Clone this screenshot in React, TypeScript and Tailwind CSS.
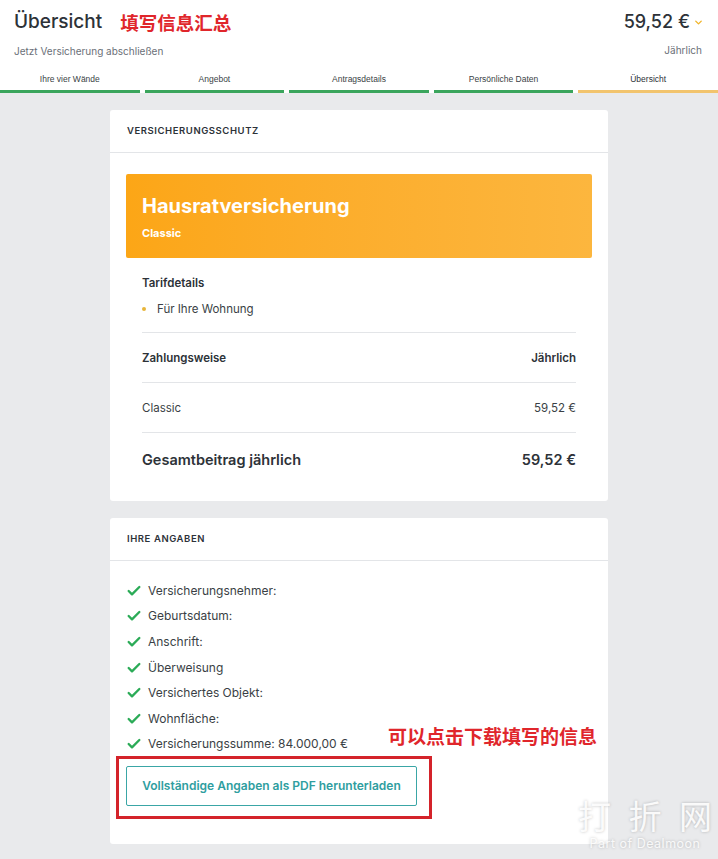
import { ChevronDown, Check } from 'lucide-react';

const steps = [
  { label: 'Ihre vier Wände', done: true },
  { label: 'Angebot', done: true },
  { label: 'Antragsdetails', done: true },
  { label: 'Persönliche Daten', done: true },
  { label: 'Übersicht', done: false },
];

const angaben = [
  'Versicherungsnehmer:',
  'Geburtsdatum:',
  'Anschrift:',
  'Überweisung',
  'Versichertes Objekt:',
  'Wohnfläche:',
  'Versicherungssumme: 84.000,00 €',
];

const font = { fontFamily: 'Inter, "Noto Sans CJK SC", sans-serif' };
const cjk = { fontFamily: '"Noto Sans CJK SC", sans-serif' };

export default function App() {
  return (
    <div className="relative min-h-[859px] w-[718px] overflow-hidden bg-[#e9eaec] text-[#2d3238]" style={font}>
      {/* Kopfbereich */}
      <header className="bg-white">
        <div className="flex justify-between px-[14px] pt-[9px]">
          <div>
            <div className="flex items-center gap-[18px]">
              <h1 className="text-[19px] font-medium leading-[26px] text-[#2d3238]">Übersicht</h1>
              <span className="text-[18.5px] font-bold leading-[24px] text-[#e0262b]" style={cjk}>
                填写信息汇总
              </span>
            </div>
            <p className="mt-[9px] text-[10px] leading-[14px] text-[#6b7078]">Jetzt Versicherung abschließen</p>
          </div>
          <div className="flex flex-col items-end pt-[1px]">
            <div className="flex items-center gap-[3px]">
              <span className="text-[18px] font-medium leading-[24px]">59,52 €</span>
              <ChevronDown className="h-[11px] w-[11px] text-[#f0b429]" strokeWidth={3} />
            </div>
            <span className="mt-[9px] pr-[2px] text-[10px] leading-[14px] text-[#6b7078]">Jährlich</span>
          </div>
        </div>
        <nav className="mt-[15px] flex gap-[5px]">
          {steps.map((s) => (
            <div key={s.label} className="flex flex-1 flex-col items-center">
              <span className={`text-[8.5px] leading-[12px] ${s.done ? 'text-[#3a3f45]' : 'font-medium text-[#2d3238]'}`} style={{ fontFamily: '"Liberation Sans", Arial, sans-serif' }}>
                {s.label}
              </span>
              <div className={`mt-[5px] h-[3px] w-full ${s.done ? 'bg-[#3aa55c]' : 'bg-[#f2c46d]'}`} />
            </div>
          ))}
        </nav>
      </header>

      <main className="flex flex-col items-center gap-[17px] pb-[14px] pt-[17px]">
        {/* Versicherungsschutz */}
        <section className="w-[498px] rounded-[3px] bg-white">
          <div className="border-b border-[#e3e5e8] px-[17px] py-[14px]">
            <h2 className="text-[9.5px] font-semibold uppercase leading-[14px] tracking-[0.06em] text-[#2d3238]">Versicherungsschutz</h2>
          </div>
          <div className="px-[16px] pt-[21px] pb-[30px]">
            <div className="rounded-[2px] bg-gradient-to-r from-[#fca616] to-[#fcb63e] px-[16px] pt-[18px] pb-[17px] text-white">
              <div className="text-[20px] font-bold leading-[28px]">Hausratversicherung</div>
              <div className="mt-[5px] text-[11px] font-bold leading-[16px]">Classic</div>
            </div>
            <div className="px-[16px]">
              <div className="pt-[17px] text-[11.5px] font-semibold leading-[16px]">Tarifdetails</div>
              <div className="mt-[10px] flex items-center gap-[11px] pb-[15px]">
                <span className="h-[4px] w-[4px] rounded-full bg-[#e8b53a]" />
                <span className="text-[11.5px] leading-[16px] text-[#3a3f45]">Für Ihre Wohnung</span>
              </div>
              <div className="flex items-center justify-between border-t border-[#e3e5e8] pt-[17px] pb-[16px] text-[11.5px] font-semibold leading-[16px]">
                <span>Zahlungsweise</span>
                <span>Jährlich</span>
              </div>
              <div className="flex items-center justify-between border-t border-[#e3e5e8] pt-[17px] pb-[16px] text-[11.5px] leading-[16px] text-[#3a3f45]">
                <span>Classic</span>
                <span>59,52 €</span>
              </div>
              <div className="flex items-center justify-between border-t border-[#e3e5e8] pt-[16px] text-[14.5px] font-semibold leading-[22px]">
                <span>Gesamtbeitrag jährlich</span>
                <span>59,52 €</span>
              </div>
            </div>
          </div>
        </section>

        {/* Ihre Angaben */}
        <section className="w-[498px] rounded-[3px] bg-white">
          <div className="border-b border-[#e3e5e8] px-[17px] py-[14px]">
            <h2 className="text-[9.5px] font-semibold uppercase leading-[14px] tracking-[0.06em] text-[#2d3238]">Ihre Angaben</h2>
          </div>
          <div className="relative px-[16px] pt-[17px] pb-[25px]">
            <ul className="flex flex-col">
              {angaben.map((a) => (
                <li key={a} className="flex h-[25.6px] items-center gap-[6px]">
                  <Check className="h-[16px] w-[16px] text-[#2bab57]" strokeWidth={3.5} />
                  <span className="text-[12px] leading-[16px] text-[#3a3f45]">{a}</span>
                </li>
              ))}
            </ul>
            <span className="absolute left-[278px] top-[163px] text-[19px] font-bold leading-[24px] text-[#e0262b]" style={cjk}>
              可以点击下载填写的信息
            </span>
            <div className="-ml-[10px] -mt-[1px] inline-block border-[3px] border-[#d4232a] pt-[7px] pb-[10px] pl-[7px] pr-[12px]">
              <button className="block h-[40px] w-[291px] rounded-[2px] border border-[#3aa6a6] text-[12px] font-semibold text-[#2f9ea0]">
                Vollständige Angaben als PDF herunterladen
              </button>
            </div>
          </div>
        </section>
      </main>

      {/* Wasserzeichen */}
      <div className="pointer-events-none absolute left-[578px] top-[795px] flex w-[134px] flex-col items-center whitespace-nowrap text-white/90 [text-shadow:0_0_3px_rgba(0,0,0,0.25)]">
        <div className="flex w-full justify-between text-[33px] leading-[40px]" style={cjk}>
          <span>打</span>
          <span>折</span>
          <span>网</span>
        </div>
        <span className="mt-[1px] text-[12.5px] leading-[16px] tracking-[0.04em] text-white/85">Part of Dealmoon</span>
      </div>
    </div>
  );
}
